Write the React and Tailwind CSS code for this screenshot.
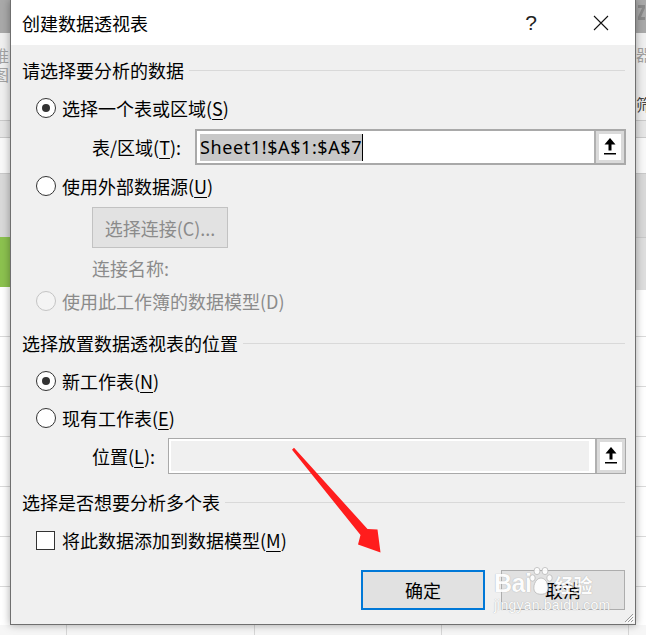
import React from "react";

function Radio({ checked, disabled }) {
  return (
    <span
      className={
        disabled
          ? "flex h-[20px] w-[20px] shrink-0 items-center justify-center rounded-full border border-[#c4c4c4] bg-[#f4f4f4]"
          : "flex h-[20px] w-[20px] shrink-0 items-center justify-center rounded-full border border-[#333333] bg-white"
      }
    >
      {checked && <span className="h-[8px] w-[8px] rounded-full bg-[#333333]" />}
    </span>
  );
}

function U({ children }) {
  return <span className="underline decoration-1 underline-offset-[3px]">{children}</span>;
}

function PickButton() {
  return (
    <div className="flex h-full w-[30px] shrink-0 border-l-2 border-[#b0b0b0] bg-[#dadada] p-[3px]">
      <div className="flex h-full w-full items-center justify-center bg-white">
        <svg width="12" height="18" viewBox="0 0 12 18">
          <polygon points="6,0 0.5,6.5 11.5,6.5" fill="#000" />
          <rect x="4.5" y="6" width="3" height="6.5" fill="#000" />
          <rect x="0" y="15" width="12" height="1.5" fill="#000" />
        </svg>
      </div>
    </div>
  );
}

function Header({ children, h }) {
  return (
    <div className={`flex items-center pl-[11px] pr-[10px] ${h}`}>
      <span className="leading-[24px]">{children}</span>
      <div className="ml-[5px] h-px flex-1 bg-[#d9d9d9]" />
    </div>
  );
}

function LeftStrip() {
  return (
    <div className="flex flex-col overflow-hidden">
      <div className="h-[33px] shrink-0 bg-[#a9a9a9]" />
      <div className="h-[87px] shrink-0 overflow-hidden bg-[#f0f0f0] text-[16px] leading-[18px] text-[#a3a3a3]">
        <div className="ml-[-7px] mt-[13px]">推</div>
        <div className="ml-[-7px] mt-[1px]">图</div>
      </div>
      <div className="h-px shrink-0 bg-[#c9c9c9]" />
      <div className="h-[16px] shrink-0 bg-[#e6e6e6]" />
      <div className="h-px shrink-0 bg-[#c9c9c9]" />
      <div className="h-[35px] shrink-0 bg-[#f9f9f9]" />
      <div className="h-px shrink-0 bg-[#c9c9c9]" />
      <div className="h-[63px] shrink-0 bg-[#d9d9d9]" />
      <div className="h-[50px] shrink-0 bg-[#8cc24f]" />
      <div className="flex-1 bg-white">
        {[0, 1, 2, 3, 4, 5, 6].map((i) => (
          <div key={i} className="h-[50px] border-b border-[#dadada]" />
        ))}
      </div>
    </div>
  );
}

function RightStrip() {
  return (
    <div className="flex flex-col overflow-hidden">
      <div className="flex h-[33px] shrink-0 items-start bg-[#a9a9a9] pl-[2px] pt-[3px]">
        <svg width="8" height="26" viewBox="0 0 8 26">
          <polygon points="0,2 7,2 7,5 3,14 7,14 7,17 0,17 0,14 4,5 0,5" fill="#8a8a8a" />
        </svg>
      </div>
      <div className="h-[87px] shrink-0 overflow-hidden bg-[#f0f0f0] text-[16px] leading-[18px]">
        <div className="mt-[12px] text-[#a3a3a3]">器</div>
        <div className="mt-[32px] text-[#444444]">筛</div>
      </div>
      <div className="h-px shrink-0 bg-[#c9c9c9]" />
      <div className="h-[16px] shrink-0 bg-[#e6e6e6]" />
      <div className="h-px shrink-0 bg-[#c9c9c9]" />
      <div className="h-[35px] shrink-0 bg-[#f9f9f9]" />
      <div className="h-px shrink-0 bg-[#c9c9c9]" />
      <div className="h-[63px] shrink-0 bg-[#d9d9d9]" />
      <div className="h-[53px] shrink-0 border-t border-[#c9c9c9] bg-[#dedede]" />
      <div className="flex-1 bg-white">
        <div className="h-[47px] border-b border-[#dadada]" />
        {[0, 1, 2, 3, 4, 5].map((i) => (
          <div key={i} className="h-[50px] border-b border-[#dadada]" />
        ))}
      </div>
    </div>
  );
}

function BottomStrip() {
  return (
    <div className="col-span-3 flex bg-[#f6f6f6]">
      <div className="w-[67px] border-r border-[#d6d6d6]" />
      <div className="w-[188px] border-r border-[#d6d6d6]" />
      <div className="w-[187px] border-r border-[#d6d6d6]" />
      <div className="w-[187px] border-r border-[#d6d6d6]" />
      <div className="flex-1" />
    </div>
  );
}

function Dialog() {
  return (
    <div className="relative z-10 flex flex-col border-x border-b border-[#6f6f6f] bg-[#f0f0f0] text-[18px] text-black shadow-[0_0_8px_rgba(0,0,0,0.35)]">
      {/* title bar */}
      <div className="flex h-[45px] shrink-0 items-center bg-white pl-[11px] pr-[11px]">
        <span className="leading-[24px]">创建数据透视表</span>
        <div className="flex-1" />
        <div className="flex w-[46px] items-center justify-center font-['Liberation_Sans',sans-serif] text-[21px] font-light leading-none text-[#222]">
          ?
        </div>
        <div className="ml-[24px] flex w-[46px] items-center justify-center">
          <svg width="16" height="16" viewBox="0 0 16 16">
            <path d="M1 1 L15 15 M15 1 L1 15" stroke="#111" strokeWidth="1.1" />
          </svg>
        </div>
      </div>

      <Header h="h-[50px]">请选择要分析的数据</Header>

      <div className="flex h-[26px] items-center gap-[6px] pl-[25px]">
        <Radio checked />
        <span className="leading-[24px]">
          选择一个表或区域(<U>S</U>)
        </span>
      </div>

      <div className="flex h-[52px] items-center pl-[81px] pr-[9px]">
        <span className="w-[103px] shrink-0 leading-[24px]">
          表/区域(<U>T</U>):
        </span>
        <div className="flex h-[36px] flex-1 border-2 border-[#a9a9a9] bg-white">
          <div className="flex flex-1 items-center pl-[3px]">
            <span className="bg-[#c8c8c8] font-['Noto_Sans',sans-serif] text-[18px] leading-[27px] tracking-[0.6px] text-black">
              Sheet1!$A$1:$A$7
            </span>
            <span className="h-[27px] w-px bg-black" />
          </div>
          <PickButton />
        </div>
      </div>

      <div className="flex h-[26px] items-center gap-[6px] pl-[25px]">
        <Radio />
        <span className="leading-[24px]">
          使用外部数据源(<U>U</U>)
        </span>
      </div>

      <div className="h-[57px] pl-[81px] pt-[8px]">
        <div className="flex h-[41px] w-[136px] items-center justify-center border border-[#c2c2c2] bg-[#e2e2e2] leading-[24px] text-[#8b8b8b]">
          选择连接(C)...
        </div>
      </div>

      <div className="flex h-[24px] items-center pl-[81px] leading-[24px] text-[#8b8b8b]">连接名称:</div>

      <div className="flex h-[42px] items-center gap-[6px] pl-[25px] text-[#8b8b8b]">
        <Radio disabled />
        <span className="leading-[24px]">使用此工作簿的数据模型(D)</span>
      </div>

      <Header h="h-[42px]">选择放置数据透视表的位置</Header>

      <div className="flex h-[34px] items-center gap-[6px] pl-[25px]">
        <Radio checked />
        <span className="leading-[24px]">
          新工作表(<U>N</U>)
        </span>
      </div>

      <div className="flex h-[40px] items-center gap-[6px] pl-[25px]">
        <Radio />
        <span className="leading-[24px]">
          现有工作表(<U>E</U>)
        </span>
      </div>

      <div className="flex h-[36px] items-center pl-[81px] pr-[9px]">
        <span className="w-[76px] shrink-0 leading-[24px]">
          位置(<U>L</U>):
        </span>
        <div className="flex h-[36px] flex-1 border border-[#a9a9a9] bg-[#f0f0f0]">
          <div className="flex-1 border-2 border-r-[6px] border-white bg-[#f0f0f0]" />
          <PickButton />
        </div>
      </div>

      <Header h="h-[56px]">选择是否想要分析多个表</Header>

      <div className="flex h-[20px] items-center gap-[7px] pl-[25px]">
        <span className="h-[19px] w-[19px] shrink-0 border border-[#333333] bg-white" />
        <span className="leading-[24px]">
          将此数据添加到数据模型(<U>M</U>)
        </span>
      </div>

      <div className="mt-[20px] flex h-[40px] justify-end gap-[16px] pr-[10px]">
        <div className="flex w-[124px] items-center justify-center border-2 border-[#0078d7] bg-[#e1e1e1] leading-[24px]">
          确定
        </div>
        <div className="flex w-[124px] items-center justify-center border border-[#adadad] bg-[#e1e1e1] leading-[24px]">
          取消
        </div>
      </div>
      <div className="flex-1" />

      {/* resize grip */}
      <svg className="absolute bottom-[1px] right-[1px]" width="11" height="11" viewBox="0 0 11 11">
        <path d="M10 2 L2 10 M10 5 L5 10 M10 8 L8 10" stroke="#9a9a9a" strokeWidth="1" />
        <path d="M11 3 L3 11 M11 6 L6 11 M11 9 L9 11" stroke="#ffffff" strokeWidth="1" />
      </svg>
    </div>
  );
}

function Watermark() {
  return (
    <div className="pointer-events-none absolute left-[494px] top-[566px] z-20 h-[54px] w-[125px] text-white opacity-90 [text-shadow:0_0_1px_#9a9a9a]">
      <div className="flex items-end">
        <span className="font-['Liberation_Sans',sans-serif] text-[25px] font-bold leading-[30px] tracking-[-0.5px]">Bai</span>
        <svg className="mb-[2px] ml-[-2px]" width="24" height="30" viewBox="0 0 24 30">
          <g fill="#ffffff" stroke="#b5b5b5" strokeWidth="0.8">
            <ellipse cx="8" cy="5" rx="3" ry="3.6" />
            <ellipse cx="16" cy="5" rx="3" ry="3.6" />
            <ellipse cx="3.5" cy="12" rx="2.7" ry="3.2" />
            <ellipse cx="20.5" cy="12" rx="2.7" ry="3.2" />
            <path d="M12 12 C6 12 3 22 6 26 C8 29 16 29 18 26 C21 22 18 12 12 12 Z" />
          </g>
        </svg>
        <span className="ml-[1px] font-['Noto_Sans_CJK_SC',sans-serif] text-[19px] font-bold leading-[26px]">经验</span>
      </div>
      <div className="mt-[-1px] font-['Liberation_Sans',sans-serif] text-[14px] leading-[16px] tracking-[0.2px]">
        jingyan.baidu.com
      </div>
    </div>
  );
}

function RedArrow() {
  return (
    <svg className="pointer-events-none absolute left-0 top-0 z-30" width="646" height="635" viewBox="0 0 646 635">
      <polygon
        points="294,447.8 367.5,529 377.5,529.5 380.5,552.5 358,544.5 360.5,535 292,449.8"
        fill="#ff1d1d"
      />
    </svg>
  );
}

export default function App() {
  return (
    <div className="relative grid h-[635px] w-[646px] grid-cols-[10px_626px_10px] grid-rows-[625px_10px] overflow-hidden bg-white font-['Noto_Sans_CJK_SC','Noto_Sans',sans-serif]">
      <LeftStrip />
      <Dialog />
      <RightStrip />
      <BottomStrip />
      <Watermark />
      <RedArrow />
    </div>
  );
}
